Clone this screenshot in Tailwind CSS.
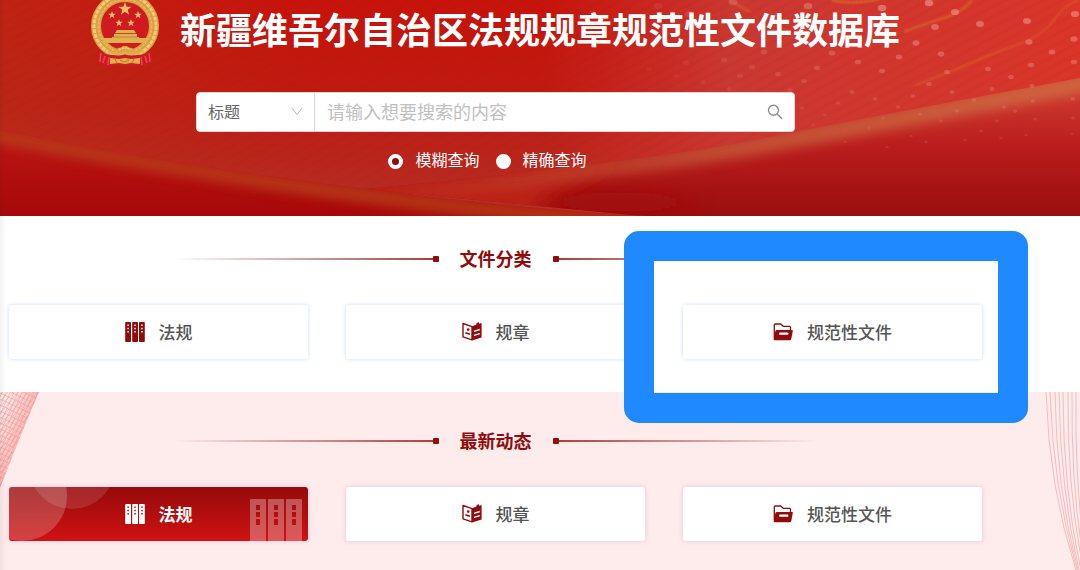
<!DOCTYPE html>
<html lang="zh-CN">
<head>
    <meta charset="UTF-8">
    <meta name="viewport" content="width=device-width, initial-scale=1.0">
    <title>新疆维吾尔自治区法规规章规范性文件数据库</title>
    <script src="https://cdn.jsdelivr.net/npm/@tailwindcss/browser@4"></script>
</head>
<body class="relative flex min-h-screen flex-col overflow-x-hidden bg-white font-['Noto_Sans_CJK_SC',sans-serif] text-[#555]">

    <!-- 图标 -->
    <svg class="hidden">
        <symbol id="icon-books" viewBox="0 0 20 20">
            <path fill="currentColor" fill-rule="evenodd" d="M1 0h4.200a.8.8 0 0 1 .8.8v18.400a.8.8 0 0 1-.8.8H1a.8.8 0 0 1-.8-.8V.8A.8.8 0 0 1 1 0zM2.400 2.500v1.600h1.500V2.500zm0 3.200v1.600h1.500V5.700zm0 3.200v1.600h1.500V8.900z"/>
            <path fill="currentColor" fill-rule="evenodd" d="M8 0h4.200a.8.8 0 0 1 .8.8v18.400a.8.8 0 0 1-.8.8H8a.8.8 0 0 1-.8-.8V.8A.8.8 0 0 1 8 0zM9.300 2.500v1.600h1.500V2.500zm0 3.200v1.600h1.500V5.700zm0 3.200v1.600h1.500V8.900z"/>
            <path fill="currentColor" fill-rule="evenodd" d="M14.800 0H19a.8.8 0 0 1 .8.8v18.400a.8.8 0 0 1-.8.8h-4.200a.8.8 0 0 1-.8-.8V.8a.8.8 0 0 1 .8-.8zM16.200 2.500v1.600h1.500V2.500zm0 3.200v1.600h1.500V5.700zm0 3.200v1.600h1.500V8.900z"/>
        </symbol>
        <symbol id="icon-book" viewBox="0 0 20 20">
            <path fill="none" stroke="currentColor" stroke-width="1.400" stroke-linejoin="round" d="M1 1.500 10 4.600v13.200L1 14.800z"/>
            <path fill="currentColor" d="M10 4.300 14.500 2.600V1L17 .3v1.500l2.600-.7v14.300L10 18.600z"/>
            <circle cx="6.200" cy="7.600" r="1.300" fill="currentColor"/>
            <path stroke="currentColor" stroke-width="1.500" d="M3.400 10.800l4.600 1.500"/>
            <path stroke="#fff" stroke-width="1.400" d="M12 9.300l5.800-1.800M12 13.400l5.800-1.800"/>
        </symbol>
        <symbol id="icon-folder" viewBox="0 0 20 20">
            <path fill="none" stroke="currentColor" stroke-width="1.300" stroke-linejoin="round" d="M1.300 16V3q0-1 1-1h5.500l2.400 2.300h6.300q1 0 1 1V9"/>
            <path fill="currentColor" d="M4 8h15q1 0 .8 1l-1.600 8.200q-.2 1-1.200 1H1.600q-1 0-1-1L2.400 9Q2.600 8 4 8z"/>
            <rect x="6.300" y="10.600" width="9" height="2.200" rx=".6" fill="#fff"/>
        </symbol>
        <symbol id="star" viewBox="-10 -10 20 20">
            <path fill="#eec06a" d="M0-10 2.400-3.200 9.500-3.100 3.800 1.200 5.900 8.100 0 4 -5.900 8.100 -3.800 1.200 -9.500-3.100 -2.400-3.200z"/>
        </symbol>
    </svg>

    <header class="relative overflow-hidden bg-[#c4160d] pr-[98px] pb-11 pl-[9px]">
        <svg class="absolute inset-0 h-full w-full" viewBox="0 0 1080 216" preserveAspectRatio="none" aria-hidden="true">
            <defs>
                <linearGradient id="base" x1="0" y1="0" x2="0" y2="1">
                    <stop offset="0" stop-color="#c7130b"/>
                    <stop offset=".5" stop-color="#be1b10"/>
                    <stop offset="1" stop-color="#b53028"/>
                </linearGradient>
                <linearGradient id="glow">
                    <stop offset="0" stop-color="#cc3028" stop-opacity="0"/>
                    <stop offset=".35" stop-color="#ca3832"/>
                    <stop offset="1" stop-color="#da3528"/>
                </linearGradient>
                <linearGradient id="leftSide">
                    <stop offset="0" stop-color="#b8331c" stop-opacity=".5"/>
                    <stop offset="1" stop-color="#b8331c" stop-opacity="0"/>
                </linearGradient>
                <linearGradient id="haze" x1="380" y1="0" x2="1080" y2="0" gradientUnits="userSpaceOnUse">
                    <stop offset="0" stop-color="#c8603c" stop-opacity="0"/>
                    <stop offset=".5" stop-color="#c8603c" stop-opacity=".75"/>
                    <stop offset="1" stop-color="#cf6b42" stop-opacity=".9"/>
                </linearGradient>
                <linearGradient id="leftWave" x1="0" y1="130" x2="0" y2="216" gradientUnits="userSpaceOnUse">
                    <stop offset="0" stop-color="#be1716"/>
                    <stop offset="1" stop-color="#a60808"/>
                </linearGradient>
                <linearGradient id="rightWave" x1="0" y1="90" x2="0" y2="216" gradientUnits="userSpaceOnUse">
                    <stop offset="0" stop-color="#cf3a30"/>
                    <stop offset=".45" stop-color="#b91d1d"/>
                    <stop offset="1" stop-color="#9c0d0e"/>
                </linearGradient>
                <pattern id="stripes" width="9" height="9" patternUnits="userSpaceOnUse" patternTransform="rotate(-28)">
                    <path d="M0 4h9" stroke="#8f0a0a" stroke-width="3" opacity=".06"/>
                </pattern>
                <filter id="soft" filterUnits="userSpaceOnUse" x="-40" y="-40" width="1160" height="300"><feGaussianBlur stdDeviation="6"/></filter>
                <filter id="wide" filterUnits="userSpaceOnUse" x="-40" y="-40" width="1160" height="300"><feGaussianBlur stdDeviation="14 8"/></filter>
                <filter id="thin" filterUnits="userSpaceOnUse" x="-40" y="-40" width="1160" height="300"><feGaussianBlur stdDeviation="1"/></filter>
                <clipPath id="leftClip"><path d="M0 130Q160 163 365 189T700 218H0z"/></clipPath>
                <clipPath id="rightClip"><path d="M365 189Q640 162 747 141T1080 78V216H640z"/></clipPath>
            </defs>
            <rect width="1080" height="216" fill="url(#base)"/>
            <rect width="300" height="216" fill="url(#leftSide)"/>
            <rect x="540" width="540" height="216" fill="url(#glow)"/>
            <rect width="1080" height="216" fill="url(#stripes)"/>
            <g clip-path="url(#rightClip)">
                <rect x="360" y="70" width="720" height="146" fill="url(#rightWave)"/>
                <path d="M350 175H520L620 160 560 190 520 225H350z" fill="#bb2418" filter="url(#wide)"/>
                <path d="M380 195Q640 166 747 147T1100 80" fill="none" stroke="url(#haze)" stroke-width="18" filter="url(#soft)"/>
                <ellipse cx="620" cy="202" rx="70" ry="10" fill="#a20707" opacity=".8" filter="url(#wide)"/>
            </g>
            <g clip-path="url(#leftClip)">
                <rect y="120" width="720" height="96" fill="url(#leftWave)"/>
                <path d="M-10 134Q160 168 365 195T700 222" fill="none" stroke="#b8401f" stroke-width="15" opacity=".85" filter="url(#soft)"/>
            </g>
            <g fill="none" stroke="#e88a30" stroke-width="2" filter="url(#thin)">
                <path d="M730 0q12 8 20 12" opacity=".4"/>
                <path d="M832 0q18 5 48-1" stroke-dasharray="3 1" opacity=".8"/>
                <path d="M972 0q-10 13-28 18t-40 14" opacity=".5"/>
                <path d="M1080 0q-18 6-26 20t-40 26-48 19-50 20" stroke-width="1" opacity=".65"/>
            </g>
            <g id="dots" fill="#ef9c98"></g>
        </svg>

        <div class="relative flex justify-center gap-[21px]">
            <svg class="h-[67px] w-[68px] shrink-0" viewBox="0 0 68 67" role="img" aria-label="国徽">
                <circle cx="34" cy="26" r="29" fill="#cf1a22" stroke="#d9a043" stroke-width="10"/>
                <circle cx="34" cy="26" r="31" fill="none" stroke="#efca7a" stroke-width="3" stroke-dasharray="4 1"/>
                <circle cx="34" cy="26" r="26.500" fill="none" stroke="#e6b65a" stroke-width="2" stroke-dasharray="3 1"/>
                <use href="#star" x="27" y="2" width="14" height="14"/>
                <use href="#star" x="17" y="11" width="8" height="8"/>
                <use href="#star" x="43" y="11" width="8" height="8"/>
                <use href="#star" x="24" y="19" width="8" height="8"/>
                <use href="#star" x="36" y="19" width="8" height="8"/>
                <path fill="#e3b050" d="M26 30h17l2 3H24zM23 34h23v3H23zM21 37h27v2H21zM11 38h46l-2 5H13z"/>
                <path stroke="#a9682a" stroke-width=".6" d="M24 33.500h21M22 37h25"/>
                <path fill="#d9a548" d="M25 51l2-3 3-.5 2-1.500h4l2 1.500 3 .5 2 3-3 2H28z"/>
                <path fill="none" stroke="#f0cd7c" stroke-width="1.500" stroke-dasharray="2 1" d="M28 50q6-4 12 0"/>
                <path fill="#cc1b22" d="M8 50q6 5 14 5 6 1 12-1 6 2 12 1 8 0 14-5l1 13-6 1-1 2H14l-1-2-6-1z"/>
                <path fill="none" stroke="#e8474a" stroke-width="1.500" d="M10 53 9 62M14 56l-2 7M18 57l-1 8M58 53l1 9M54 56l2 7M50 57l1 8"/>
                <path fill="none" stroke="#e2ae4c" stroke-width="2.500" d="M17 51q8 5 17 2 9 3 17-2"/>
                <path fill="#e2ae4c" d="M19 58l9 1 6-1 6 1 9-1v6l-9-1-6 1-6-1-9 1z"/>
                <path fill="none" stroke="#a5641f" stroke-width=".7" d="M24 59l2 4M29 60l4 2 5-2M43 59l-2 4"/>
            </svg>
            <h1 class="text-4xl leading-[56px] font-bold whitespace-nowrap text-white">新疆维吾尔自治区法规规章规范性文件数据库</h1>
        </div>

        <form class="relative" onsubmit="return false">
            <div class="mx-auto mt-[25px] flex h-10 max-w-[599px] overflow-hidden rounded border border-[#d9d9d9] bg-white">
                <div class="relative w-[118px] shrink-0 border-r border-[#d9d9d9]">
                    <select aria-label="搜索范围" class="h-full w-full appearance-none bg-transparent pb-[3px] pl-[11px] text-base text-[#666] outline-none">
                        <option>标题</option>
                        <option>正文</option>
                    </select>
                    <svg class="pointer-events-none absolute top-[13px] right-[11px] h-3 w-3" viewBox="0 0 12 12" fill="none" stroke="#b8b8b8"><path d="M1 2l5 6.500L11 2"/></svg>
                </div>
                <input type="text" aria-label="搜索内容" placeholder="请输入想要搜索的内容" class="min-w-0 flex-1 px-3 pb-[3px] text-lg text-[#555] outline-none placeholder:text-[#bfbfbf]">
                <button type="submit" aria-label="搜索" class="flex w-[38px] items-center justify-center">
                    <svg class="h-4 w-4" viewBox="0 0 16 16" fill="none" stroke="#8c8c8c" stroke-width="1.400"><circle cx="6.500" cy="6.300" r="5"/><path d="M10.200 10l4.800 4.800"/></svg>
                </button>
            </div>
            <div class="mt-[15px] mb-px flex justify-center text-base leading-6 text-white">
                <label class="mr-4 flex items-center gap-3"><input type="radio" name="mode" checked class="mt-1 h-[15px] w-[15px] appearance-none rounded-full bg-white checked:border-4 checked:border-white checked:bg-[#900b0b]">模糊查询</label>
                <label class="mr-4 flex items-center gap-3"><input type="radio" name="mode" class="mt-1 h-[15px] w-[15px] appearance-none rounded-full bg-white checked:border-4 checked:border-white checked:bg-[#900b0b]">精确查询</label>
            </div>
        </form>
    </header>

    <section class="pt-[29px] pr-[98px] pb-[33px] pl-[9px]">
        <div class="flex h-7 items-center justify-center gap-[21px] text-[#900b0b]">
            <div class="flex items-center"><i class="h-[2px] w-[260px] bg-linear-to-r from-transparent to-[#a84040]"></i><i class="h-[6px] w-[6px] rounded-[1px] bg-[#900b0b]"></i></div>
            <h2 class="pb-[2px] text-lg font-bold">文件分类</h2>
            <div class="flex items-center"><i class="h-[6px] w-[6px] rounded-[1px] bg-[#900b0b]"></i><i class="h-[2px] w-[260px] bg-linear-to-l from-transparent to-[#a84040]"></i></div>
        </div>
        <div class="mt-8 grid grid-cols-3 gap-[38px] text-[17px] font-medium">
            <a href="#" class="flex h-[54px] items-center justify-center gap-[14px] rounded-[3px] bg-white shadow-[0_0_5px_#cfdcff]">
                <svg class="h-5 w-5 text-[#900b0b]"><use href="#icon-books"/></svg>法规
            </a>
            <a href="#" class="flex h-[54px] items-center justify-center gap-[14px] rounded-[3px] bg-white shadow-[0_0_5px_#cfdcff]">
                <svg class="h-5 w-5 text-[#900b0b]"><use href="#icon-book"/></svg>规章
            </a>
            <div class="relative">
                <a href="#" class="flex h-[54px] items-center justify-center gap-[14px] rounded-[3px] bg-white shadow-[0_0_5px_#cfdcff]">
                    <svg class="h-5 w-5 text-[#900b0b]"><use href="#icon-folder"/></svg>规范性文件
                </a>
                <!-- 高亮框 -->
                <div class="pointer-events-none absolute -top-[74px] -right-[46px] -bottom-[64px] -left-[59px] z-10 rounded-[15px] border-[30px] border-[#1f8aff]"></div>
            </div>
        </div>
    </section>

    <section class="relative flex-1 bg-[#feebeb] pt-[35px] pr-[98px] pb-[29px] pl-[9px]">
        <svg class="absolute top-0 left-0 h-24 w-10" viewBox="0 0 40 96" fill="none" aria-hidden="true">
            <defs>
                <linearGradient id="edge" x1="0" y1="0" x2="38" y2="16" gradientUnits="userSpaceOnUse"><stop offset=".2" stop-color="#f58c8c" stop-opacity="0"/><stop offset="1" stop-color="#f58c8c" stop-opacity=".6"/></linearGradient>
                <clipPath id="corner"><path d="M0 0h39Q20 44 0 96z"/></clipPath>
            </defs>
            <g id="net" clip-path="url(#corner)" stroke="#ee8585" stroke-width=".8"></g>
            <path d="M0 0h39Q20 44 0 96z" fill="url(#edge)"/>
        </svg>
        <svg class="absolute top-0 right-0 h-[178px] w-9" viewBox="0 0 36 178" fill="none" stroke="#f6bcbc" stroke-width="1" aria-hidden="true">
            <path d="M2 0Q5 96 32 178M6 0Q9 96 33 178M11 0Q12 96 34 178M15 0Q16 96 35 178M19 0Q19 96 36 174M24 0Q23 90 37 166M28 0Q27 84 37 152M32 0Q31 70 37 130"/>
        </svg>

        <div class="relative flex h-7 items-center justify-center gap-[21px] text-[#900b0b]">
            <div class="flex items-center"><i class="h-[2px] w-[260px] bg-linear-to-r from-transparent to-[#a84040]"></i><i class="h-[6px] w-[6px] rounded-[1px] bg-[#900b0b]"></i></div>
            <h2 class="pb-[2px] text-lg font-bold">最新动态</h2>
            <div class="flex items-center"><i class="h-[6px] w-[6px] rounded-[1px] bg-[#900b0b]"></i><i class="h-[2px] w-[260px] bg-linear-to-l from-transparent to-[#a84040]"></i></div>
        </div>
        <div class="relative mt-8 grid grid-cols-3 gap-[38px] text-[17px] font-medium">
            <a href="#" class="relative flex h-[54px] items-center justify-center gap-[14px] overflow-hidden rounded-[3px] bg-linear-to-b from-[#960a0c] to-[#d01212] font-bold text-white shadow-[0_0_5px_#d9c8e6]">
                <svg class="absolute top-0 left-0 h-[54px] w-28" viewBox="0 0 112 54" fill="#fff" aria-hidden="true">
                    <circle cx="13" cy="9" r="45" opacity=".2"/>
                    <circle cx="63" cy="-21" r="43" opacity=".12"/>
                </svg>
                <svg class="absolute right-[6px] bottom-0 h-[42px] w-[52px]" viewBox="0 0 52 42" fill="#fff" fill-rule="evenodd" opacity=".3" aria-hidden="true">
                    <path d="M1 0h14q1 0 1 1v41H0V1q0-1 1-1zM6 6v5h4V6zm0 7v5h4v-5zm0 7v6h4v-6z"/>
                    <path d="M19 0h14q1 0 1 1v41H18V1q0-1 1-1zM24 6v5h4V6zm0 7v5h4v-5zm0 7v6h4v-6z"/>
                    <path d="M37 0h14q1 0 1 1v41H36V1q0-1 1-1zM42 6v5h4V6zm0 7v5h4v-5zm0 7v6h4v-6z"/>
                </svg>
                <svg class="h-5 w-5"><use href="#icon-books"/></svg>法规
            </a>
            <a href="#" class="flex h-[54px] items-center justify-center gap-[14px] rounded-[3px] bg-white shadow-[0_0_5px_#e0c8e0]">
                <svg class="h-5 w-5 text-[#900b0b]"><use href="#icon-book"/></svg>规章
            </a>
            <a href="#" class="flex h-[54px] items-center justify-center gap-[14px] rounded-[3px] bg-white shadow-[0_0_5px_#e0c8e0]">
                <svg class="h-5 w-5 text-[#900b0b]"><use href="#icon-folder"/></svg>规范性文件
            </a>
        </div>
    </section>

    <div class="pointer-events-none absolute inset-y-0 left-0 w-[6px] bg-linear-to-r from-black/5 to-transparent"></div>

    <script>
        const svgNS = "http://www.w3.org/2000/svg";

        // 光点: x, y
        const dots = [
            [733, 2], [808, 6], [882, 8], [929, 3], [955, 12], [1075, 14], [658, 6], [689, 14],
            [935, 27], [980, 24], [1027, 21], [916, 43], [1029, 42], [1074, 39], [764, 52], [832, 53],
            [899, 57], [941, 54], [1052, 52], [724, 60], [686, 63], [858, 62], [1031, 65], [1074, 62],
            [752, 67], [817, 68], [778, 74], [882, 71], [947, 72], [988, 69], [1011, 77], [649, 69],
            [676, 76], [740, 76], [703, 82], [804, 81], [790, 90], [852, 92], [929, 84], [952, 92],
            [992, 89], [1032, 86], [729, 89], [913, 96], [974, 100], [1033, 101], [1073, 99], [875, 99],
            [838, 103], [898, 107], [957, 111], [1004, 107], [802, 108], [825, 115], [920, 114], [883, 118],
            [1015, 111], [1073, 118], [1035, 119], [941, 121], [997, 121], [813, 125], [869, 128], [981, 131],
            [911, 136], [1026, 135], [1001, 138], [845, 142], [887, 147], [926, 142], [965, 140], [1072, 134]
        ];
        const dotGroup = document.getElementById("dots");
        dots.forEach(([x, y]) => {
            const dot = document.createElementNS(svgNS, "ellipse");
            const size = Math.max(1.8, 4.4 - y / 50);
            const fade = Math.min(1, (x - 600) / 300);
            dot.setAttribute("cx", x);
            dot.setAttribute("cy", y);
            dot.setAttribute("rx", size);
            dot.setAttribute("ry", size * 0.75);
            dot.setAttribute("opacity", (0.6 * fade * Math.max(0.25, 1 - y / 170)).toFixed(2));
            dotGroup.appendChild(dot);
        });

        // 左侧网纹
        const net = document.getElementById("net");
        for (let i = 0; i < 26; i++) {
            const line = document.createElementNS(svgNS, "path");
            const y = i * 6;
            line.setAttribute("d", `M${4 + i * 4} -4L${i * 4 - 44} 104M-2 ${y}L40 ${y - 50}M-2 ${y - 30}L40 ${y - 10}`);
            line.setAttribute("opacity", "0.5");
            net.appendChild(line);
        }
    </script>
</body>
</html>
